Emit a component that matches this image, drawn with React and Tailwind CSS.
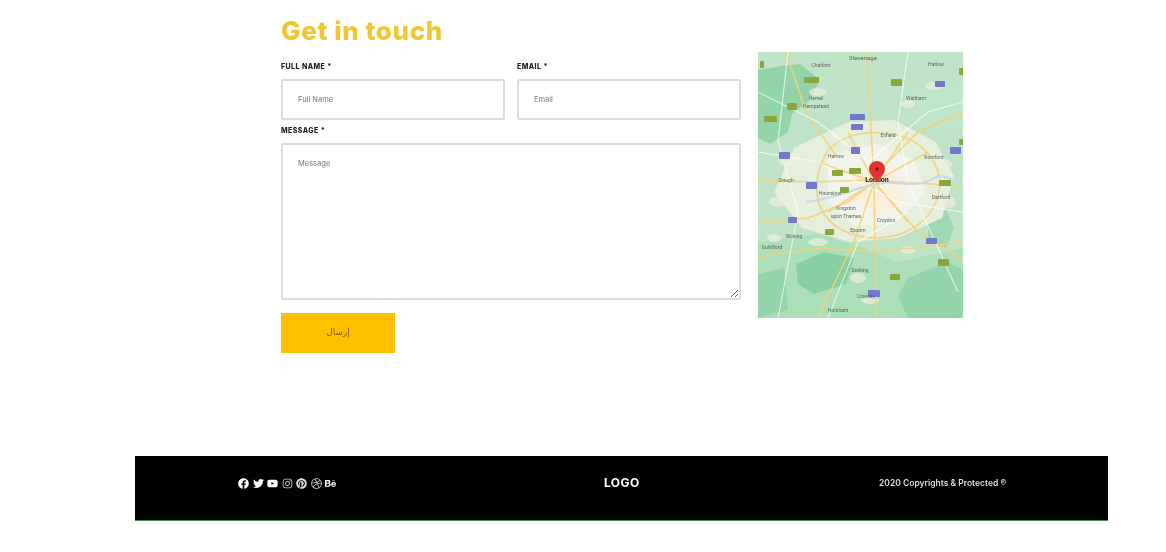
import React from 'react';
import { FaFacebook, FaTwitter, FaYoutube, FaInstagram, FaPinterest, FaDribbble, FaBehance } from 'react-icons/fa';

// small road shield badges on the map
const greenBadges = [
  [46, 25, 15, 6], [133, 27, 11, 7], [29, 51, 10, 7], [6, 64, 13, 6], [2, 9, 4, 7], [201, 16, 7, 7],
  [74, 118, 11, 6], [91, 116, 12, 6], [82, 135, 9, 6], [67, 177, 9, 6], [181, 128, 12, 6], [180, 207, 11, 7], [132, 222, 10, 6], [201, 87, 6, 6],
];
const blueBadges = [
  [177, 29, 10, 6], [92, 62, 15, 6], [93, 72, 12, 6], [93, 95, 9, 7], [21, 100, 11, 7], [192, 95, 11, 7], [48, 130, 11, 7], [30, 165, 9, 6], [168, 186, 11, 6], [110, 238, 12, 7],
];
const labels = [
  [105, 8, 'Stevenage', 6], [63, 15, 'Chalfont', 5], [178, 14, 'Harlow', 5], [58, 48, 'Hemel', 5], [58, 56, 'Hempstead', 5], [158, 48, 'Waltham', 5],
  [130, 85, 'Enfield', 5], [78, 106, 'Harrow', 5], [176, 107, 'Romford', 5], [28, 130, 'Slough', 5], [72, 143, 'Hounslow', 5], [183, 147, 'Dartford', 5],
  [88, 158, 'Kingston', 5], [88, 166, 'upon Thames', 5], [128, 170, 'Croydon', 5], [36, 186, 'Woking', 5], [14, 197, 'Guildford', 5], [100, 180, 'Epsom', 5],
  [102, 220, 'Dorking', 5], [108, 246, 'Crawley', 5], [80, 260, 'Horsham', 5],
];
// town patches scattered round the city
const towns = [
  [60, 40, 9, 4], [150, 52, 7, 4], [30, 108, 10, 6], [186, 112, 8, 5], [176, 34, 9, 4], [20, 150, 9, 5],
  [60, 190, 10, 4], [150, 198, 8, 4], [100, 226, 8, 5], [190, 150, 8, 6], [16, 186, 7, 4], [112, 248, 9, 4],
];

function MapPicture() {
  return (
    <svg width="205" height="266" viewBox="0 0 205 266" className="block shrink-0 blur-[0.5px]">
      <rect width="205" height="266" fill="#bfe3c6" />
      {/* woods and parks */}
      <path d="M0 18 L24 14 L42 12 L62 28 L50 50 L34 62 L30 80 L12 92 L0 86 Z" fill="#93d3a8" />
      <path d="M70 0 L120 0 L132 20 L118 44 L90 40 L72 18 Z" fill="#bfe4c6" />
      <path d="M140 40 L205 30 L205 78 L160 76 Z" fill="#bfe6c8" />
      <path d="M0 190 L60 182 L105 196 L140 210 L205 196 L205 266 L0 266 Z" fill="#aadfb8" />
      <path d="M38 212 L66 200 L96 206 L88 232 L56 242 L40 232 Z" fill="#88cfa2" />
      <path d="M0 222 L26 216 L30 258 L0 266 Z" fill="#93d4aa" />
      <path d="M150 226 L190 210 L205 218 L205 266 L150 266 L140 244 Z" fill="#93d4ab" />
      <path d="M170 168 L188 158 L196 176 L188 196 L170 190 Z" fill="#9cd8b0" />
      {/* built up area */}
      <path d="M36 96 L90 70 L136 68 L178 90 L196 124 L184 166 L140 186 L92 190 L44 176 L16 140 Z" fill="#e6eedc" />
      <path d="M70 104 L118 92 L156 108 L168 140 L136 172 L96 174 L70 150 Z" fill="#f2f4ec" />
      <path d="M100 122 L136 122 L148 148 L120 162 L98 150 Z" fill="#faeedd" />
      {towns.map(([x, y, rx, ry], i) => (
        <ellipse key={i} cx={x} cy={y} rx={rx} ry={ry} fill="#eef0dc" opacity="0.7" />
      ))}
      {/* motorways and main roads */}
      <g fill="none" stroke="#f3d27a" strokeWidth="1.6" opacity="0.9">
        <path d="M70 98 C52 130 54 164 88 180 C124 194 164 182 178 150 C190 120 170 92 142 84 C112 76 86 82 70 98 Z" />
        <path d="M0 128 L56 130 L110 128 L205 134" />
        <path d="M108 0 L112 60 L116 128 L118 266" />
        <path d="M0 170 L50 166 L90 150 L116 130" />
        <path d="M28 0 L48 60 L78 104" />
        <path d="M205 60 L160 80 L130 110" />
        <path d="M116 130 L160 180 L205 208" />
        <path d="M0 205 L60 196 L120 200 L205 190" />
        <path d="M116 130 L96 190 L60 266" />
        <path d="M60 110 L116 130 L170 100" />
        <path d="M90 80 L116 130 L150 80" />
        <path d="M70 160 L116 130 L150 170" />
      </g>
      <g fill="none" stroke="#ffffff" strokeWidth="1.1" opacity="0.7">
        <path d="M0 40 L60 70 L110 110 L170 60 L205 50" />
        <path d="M30 0 L20 90 L40 160 L20 266" />
        <path d="M150 0 L140 70 L150 130 L200 240" />
        <path d="M0 100 L60 110 L140 150 L205 160" />
        <path d="M70 266 L100 190 L150 160" />
      </g>
      {/* thames */}
      <path d="M48 150 C80 146 96 136 118 132 C140 128 158 138 176 126 C188 120 196 132 205 130" fill="none" stroke="#c8d9ee" strokeWidth="2" />
      {greenBadges.map(([x, y, w, h], i) => (
        <rect key={i} x={x} y={y} width={w} height={h} rx="1" fill="#8aa83a" />
      ))}
      {blueBadges.map(([x, y, w, h], i) => (
        <rect key={i} x={x} y={y} width={w} height={h} rx="1" fill="#7477cc" />
      ))}
      {labels.map(([x, y, t, s], i) => (
        <text key={i} x={x} y={y} fontSize={s} textAnchor="middle" fill="#5c665c" fontFamily="Roboto, sans-serif">{t}</text>
      ))}
      <text x="119" y="130" fontSize="7" fontWeight="700" textAnchor="middle" fill="#222222" fontFamily="Roboto, sans-serif">London</text>
      <path d="M119 109 C114 109 111 113 111 117 C111 122 116 125 119 131 C122 125 127 122 127 117 C127 113 124 109 119 109 Z" fill="#e0342f" />
      <circle cx="119" cy="117" r="1.7" fill="#7a1512" />
    </svg>
  );
}

function FieldLabel({ children }) {
  return (
    <label className="block h-[12px] text-[7px] leading-[12px] font-extrabold uppercase tracking-[0.45px] text-[#222222]">
      {children} *
    </label>
  );
}

function App() {
  const inputCls =
    "block mt-[6px] w-full h-[41px] border-2 border-[#dcdcdc] rounded-[2px] bg-white pl-[15px] text-[7.5px] outline-none placeholder:text-[#777777]";

  return (
    <div className="w-[1166px] h-[552px] bg-white overflow-hidden font-['Inter',sans-serif]">
      <section className="pl-[281px] pt-[12px]">
        <h2 className="h-[40px] text-[26px] leading-[38px] font-extrabold tracking-[0.6px] text-[#efc732] blur-[0.5px]">Get in touch</h2>
        <div className="flex gap-[17px]">
          <form className="w-[460px] blur-[0.5px]">
            <div className="grid grid-cols-2 gap-x-[12px] pt-[9px]">
              <div>
                <FieldLabel>Full Name</FieldLabel>
                <input className={inputCls} placeholder="Full Name" />
              </div>
              <div>
                <FieldLabel>Email</FieldLabel>
                <input className={inputCls} placeholder="Email" />
              </div>
            </div>
            <div className="pt-[5px]">
              <FieldLabel>Message</FieldLabel>
              <textarea
                className="block mt-[6px] w-full h-[157px] border-2 border-[#dcdcdc] rounded-[2px] bg-white pl-[15px] pt-[13px] text-[7.5px] outline-none placeholder:text-[#777777]"
                placeholder="Message"
              />
            </div>
            <button
              type="button"
              className="block mt-[13px] w-[114px] h-[40px] bg-[#ffc000] text-[9px] text-[#7d6000] font-['DejaVu_Sans',sans-serif]"
            >
              إرسال
            </button>
          </form>
          <MapPicture />
        </div>
      </section>

      <footer className="mt-[103px] ml-[135px] w-[973px] h-[65px] bg-black border-b border-[#3a8a46] grid grid-cols-[366px_275px_1fr] items-center pl-[103px] pb-[10px] text-white">
        <div className="flex items-center gap-[3.5px] text-[11px] blur-[0.4px]">
          <FaFacebook />
          <FaTwitter />
          <FaYoutube />
          <FaInstagram className="text-[#cccccc]" />
          <FaPinterest className="text-[#dddddd]" />
          <FaDribbble className="text-[#cccccc]" />
          <FaBehance />
        </div>
        <div className="text-[12px] font-bold tracking-[0.4px] blur-[0.4px]">LOGO</div>
        <div className="text-[8.5px] font-semibold text-[#dddddd] blur-[0.4px]">2020 Copyrights &amp; Protected ®</div>
      </footer>
    </div>
  );
}

export default App;
